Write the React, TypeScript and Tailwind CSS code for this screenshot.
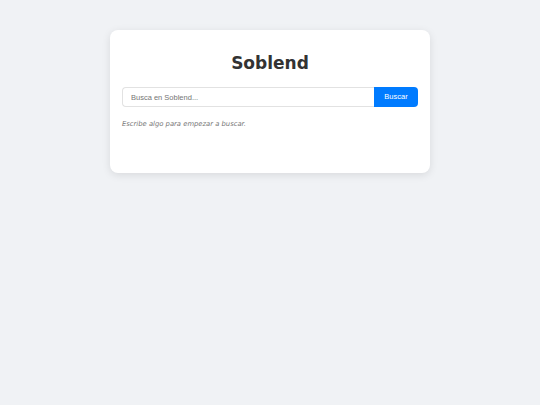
import React from "react";

export default function App() {
  return (
    <div className="min-h-[405px] w-full bg-[#f0f2f5] pt-[30px]">
      <div className="mx-auto flex h-[143px] w-[320px] flex-col rounded-[8px] bg-white px-[12px] shadow-[0_2px_8px_rgba(0,0,0,0.1)]">
        <h1 className="mt-[23px] text-center font-['DejaVu_Sans',sans-serif] text-[17px] leading-[20px] font-bold text-[#333]">
          Soblend
        </h1>
        <div className="mt-[14px] flex h-[20px]">
          <input
            type="text"
            placeholder="Busca en Soblend..."
            className="h-full min-w-0 flex-1 rounded-l-[4px] border border-r-0 border-[#e2e2e2] px-[8px] font-['Liberation_Sans',Arial,sans-serif] text-[7.5px] text-[#333] outline-none placeholder:text-[#757575]"
          />
          <button className="h-full w-[44px] rounded-r-[4px] bg-[#007bff] font-['Liberation_Sans',Arial,sans-serif] text-[7.5px] text-white">
            Buscar
          </button>
        </div>
        <p className="mt-[13px] font-['DejaVu_Sans',sans-serif] text-[6.8px] leading-[8px] text-[#777] italic">
          Escribe algo para empezar a buscar.
        </p>
      </div>
    </div>
  );
}
